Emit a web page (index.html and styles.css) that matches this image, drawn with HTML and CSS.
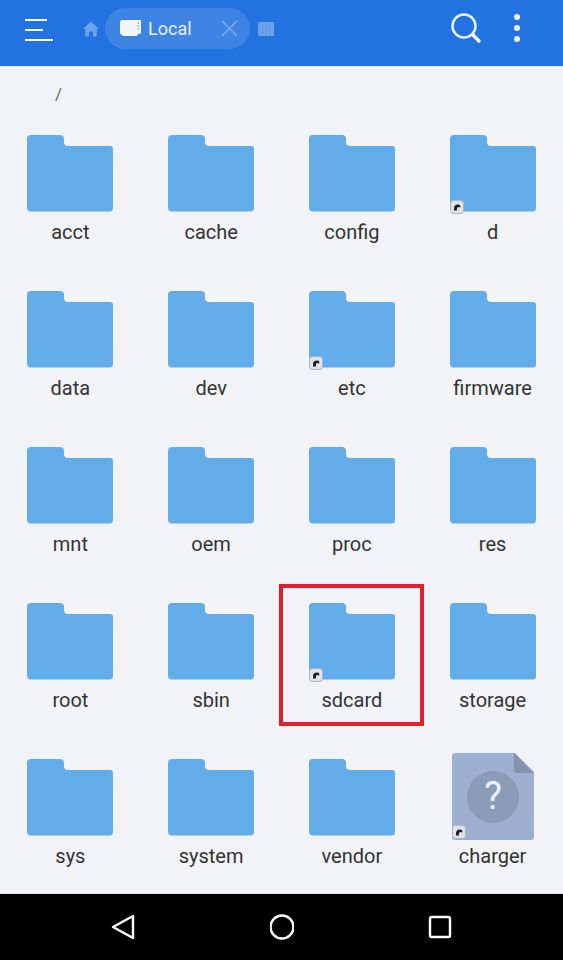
FILE: index.html
```html
<!DOCTYPE html>
<html>
    <head>
        <title>Local</title>
        <link rel="stylesheet" href="styles.css">
    </head>
    <body>
        <svg class="defs" width="0" height="0">
            <symbol id="folder" viewBox="0 0 88 78">
                <path d="M5 1H34a4 4 0 0 1 4 4V8a4 4 0 0 0 4 4H84a3 3 0 0 1 3 3V74a3.500 3.500 0 0 1-3.500 3.500H5a4 4 0 0 1-4-4V5a4 4 0 0 1 4-4z" fill="#62ade9"/>
            </symbol>
            <symbol id="link" viewBox="0 0 14 14">
                <rect x="0.5" y="0.5" width="13" height="13" rx="3" fill="#dfe3e9" stroke="#aab4c1"/>
                <path d="M4 10.500V8.500C4 6 5.500 4.500 8 4.500L10 5L10.500 7.500L8.500 7C7.200 7 6.600 8.500 7 10.500z" fill="#1b1e23"/>
            </symbol>
        </svg>

        <div class="top">
            <svg class="menu" width="30" height="26" viewBox="0 0 30 26">
                <path d="M1 2H23M1 12H19M1 22H29" stroke="#fff" stroke-width="2.2" fill="none"/>
            </svg>
            <svg class="home" width="16" height="16" viewBox="0 0 16 16">
                <path d="M8 0.5L16 8H13.8V15.5H10V10.5H6V15.5H2.2V8H0z" fill="#6ba2ea"/>
            </svg>
            <div class="tab">
                <svg width="21" height="17" viewBox="0 0 21 17">
                    <path d="M2 0H21V13.500L18 14L17 16H3L1 14.500L0 13V2a2 2 0 0 1 2-2z" fill="#f2f6fd"/>
                    <path d="M17.500 3H19M17.500 6H19M17.500 9H19" stroke="#3d83e4" stroke-width="1" fill="none"/>
                </svg>
                <span class="tab-name">Local</span>
                <svg class="tab-close" width="17" height="17" viewBox="0 0 17 17">
                    <path d="M1 1L16 16M16 1L1 16" stroke="#80ade9" stroke-width="1.6" fill="none"/>
                </svg>
            </div>
            <svg class="next" width="16" height="14" viewBox="0 0 16 14">
                <path d="M1.500 0H16V14H1.500A1.500 1.500 0 0 1 0 12.500V1.500A1.500 1.500 0 0 1 1.500 0z" fill="#6ba2ea"/>
                <path d="M4.500 2V12M8 2V12M11.500 2V12" stroke="#5b96e6" stroke-width="1" fill="none"/>
            </svg>
            <svg class="search" width="32" height="32" viewBox="0 0 32 32">
                <circle cx="13" cy="13" r="11.500" stroke="#eef5fe" stroke-width="2.400" fill="none"/>
                <path d="M21.500 21.500L28 28" stroke="#eef5fe" stroke-width="3.600" stroke-linecap="round"/>
            </svg>
            <div class="dots"><i></i><i></i><i></i></div>
        </div>

        <div class="path">/</div>

        <div class="grid">
            <div class="tile"><div class="icon"><svg class="folder"><use href="#folder"/></svg></div><span>acct</span></div>
            <div class="tile"><div class="icon"><svg class="folder"><use href="#folder"/></svg></div><span>cache</span></div>
            <div class="tile"><div class="icon"><svg class="folder"><use href="#folder"/></svg></div><span>config</span></div>
            <div class="tile"><div class="icon"><svg class="folder"><use href="#folder"/></svg><svg class="badge"><use href="#link"/></svg></div><span>d</span></div>

            <div class="tile"><div class="icon"><svg class="folder"><use href="#folder"/></svg></div><span>data</span></div>
            <div class="tile"><div class="icon"><svg class="folder"><use href="#folder"/></svg></div><span>dev</span></div>
            <div class="tile"><div class="icon"><svg class="folder"><use href="#folder"/></svg><svg class="badge"><use href="#link"/></svg></div><span>etc</span></div>
            <div class="tile"><div class="icon"><svg class="folder"><use href="#folder"/></svg></div><span>firmware</span></div>

            <div class="tile"><div class="icon"><svg class="folder"><use href="#folder"/></svg></div><span>mnt</span></div>
            <div class="tile"><div class="icon"><svg class="folder"><use href="#folder"/></svg></div><span>oem</span></div>
            <div class="tile"><div class="icon"><svg class="folder"><use href="#folder"/></svg></div><span>proc</span></div>
            <div class="tile"><div class="icon"><svg class="folder"><use href="#folder"/></svg></div><span>res</span></div>

            <div class="tile"><div class="icon"><svg class="folder"><use href="#folder"/></svg></div><span>root</span></div>
            <div class="tile"><div class="icon"><svg class="folder"><use href="#folder"/></svg></div><span>sbin</span></div>
            <div class="tile marked"><div class="icon"><svg class="folder"><use href="#folder"/></svg><svg class="badge"><use href="#link"/></svg></div><span>sdcard</span></div>
            <div class="tile"><div class="icon"><svg class="folder"><use href="#folder"/></svg></div><span>storage</span></div>

            <div class="tile"><div class="icon"><svg class="folder"><use href="#folder"/></svg></div><span>sys</span></div>
            <div class="tile"><div class="icon"><svg class="folder"><use href="#folder"/></svg></div><span>system</span></div>
            <div class="tile"><div class="icon"><svg class="folder"><use href="#folder"/></svg></div><span>vendor</span></div>
            <div class="tile">
                <div class="icon">
                    <svg class="file" viewBox="0 0 88 88">
                        <path d="M6 0H66L85 19V84a3 3 0 0 1-3 3H6a3 3 0 0 1-3-3V3a3 3 0 0 1 3-3z" fill="#9db0cf"/>
                        <path d="M65 0L85 20H69a4 4 0 0 1-4-4z" fill="#8492ab"/>
                        <circle cx="44" cy="44" r="26" fill="#8a9cb8"/>
                        <text x="44" y="56" class="file-mark">?</text>
                    </svg>
                    <svg class="badge badge-file"><use href="#link"/></svg>
                </div>
                <span class="file-name">charger</span>
            </div>
        </div>

        <div class="nav">
            <svg width="24" height="26" viewBox="0 0 24 26">
                <path d="M22 2V24L2 13z" stroke="#fff" stroke-width="2.400" stroke-linejoin="round" fill="none"/>
            </svg>
            <svg width="24" height="26" viewBox="0 0 24 26">
                <circle cx="12" cy="13" r="11.500" stroke="#fff" stroke-width="2.400" fill="none"/>
            </svg>
            <svg width="24" height="26" viewBox="0 0 24 26">
                <rect x="2" y="3" width="20" height="20" rx="1.500" stroke="#fff" stroke-width="2.400" fill="none"/>
            </svg>
        </div>
    </body>
</html>
```

FILE: styles.css
```css
html, body
{
    height: 100%;
}

body
{
    margin: 0;
    width: 563px;
    height: 960px;
    overflow: hidden;
    display: flex;
    flex-direction: column;
    background-color: #f1f3f6;
    font-family: Roboto, "Liberation Sans", sans-serif;
}

.defs
{
    display: block;
    height: 0;
}

/* blue bar */
.top
{
    height: 67px;
    flex: none;
    display: flex;
    align-items: center;
    background-color: #2272e0;
    border-bottom: 1px solid #e9eef8;
    box-sizing: border-box;
    padding-left: 24px;
}

.menu
{
    margin-top: -5px;
    margin-right: 29px;
}

.home
{
    margin-top: -9px;
}

.tab
{
    width: 145px;
    height: 41px;
    margin-top: -9px;
    margin-left: 6px;
    box-sizing: border-box;
    padding-left: 15px;
    display: flex;
    align-items: center;
    background-color: #3d83e4;
    border-radius: 21px;
}

.tab-name
{
    margin-left: 7px;
    color: #e8f1fd;
    font-size: 18px;
}

.tab-close
{
    margin-left: 29px;
}

.next
{
    margin-top: -9px;
    margin-left: 8px;
}

.search
{
    margin-top: -9px;
    margin-left: 177px;
}

.dots
{
    margin-top: -11px;
    margin-left: 31px;
    display: flex;
    flex-direction: column;
    gap: 5px;
}

.dots i
{
    display: block;
    width: 6px;
    height: 6px;
    background-color: #eef5fe;
    border-radius: 50%;
}

.path
{
    height: 67px;
    flex: none;
    box-sizing: border-box;
    padding-top: 16px;
    padding-left: 55px;
    color: #666;
    font-size: 17px;
    line-height: 22px;
}

/* file tiles */
.grid
{
    flex: 1;
    min-height: 0;
    overflow: hidden;
    display: grid;
    grid-template-columns: repeat(4, 140.75px);
    grid-auto-rows: 156px;
}

.tile
{
    position: relative;
    display: flex;
    flex-direction: column;
    align-items: center;
    color: #333;
    font-size: 20px;
    line-height: 24px;
}

.tile span
{
    margin-top: 8px;
}

.icon
{
    position: relative;
    width: 88px;
    height: 78px;
}

.folder
{
    display: block;
    width: 88px;
    height: 78px;
}

.file
{
    display: block;
    width: 88px;
    height: 88px;
    margin-top: -5px;
}

.file-mark
{
    fill: #eef1f6;
    font-family: Roboto, "Liberation Sans", sans-serif;
    font-size: 38px;
    text-anchor: middle;
}

.badge
{
    position: absolute;
    left: 1px;
    bottom: -2px;
    width: 14px;
    height: 14px;
}

.badge-file
{
    left: 3px;
    bottom: -3px;
}

.marked::after
{
    content: "";
    position: absolute;
    left: -3px;
    top: -18px;
    width: 137px;
    height: 134px;
    border: 4px solid #e0202e;
}

/* android nav */
.nav
{
    height: 67px;
    flex: none;
    display: flex;
    justify-content: center;
    align-items: center;
    gap: 134.500px;
    background-color: #000;
    border-top: 1px solid #dfe6f0;
    box-sizing: border-box;
}
```
